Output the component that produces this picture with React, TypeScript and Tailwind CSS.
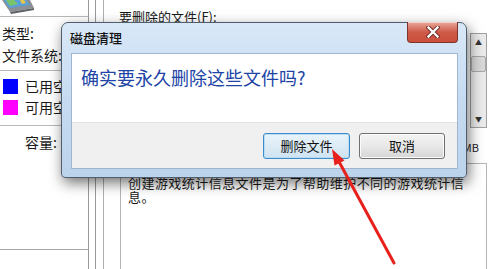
import React from "react";

const font = "font-['Noto_Sans_CJK_SC',sans-serif]";

function DriveIcon() {
  return (
    <svg width="36" height="14" viewBox="0 0 36 14" className="block">
      <path d="M2 0 L30 0 L34 8 L10 12 Z" fill="#8c8f94" />
      <path d="M4 0 L26 0 L30 5 L9 8 Z" fill="#5aa0d8" />
      <path d="M6 0 L14 0 L18 4 L10 6 Z" fill="#7cc46a" />
      <path d="M10 12 L34 8 L34 10 L11 14 Z" fill="#5e6166" />
      <path d="M20 0 L24 0 L26 3 L22 4 Z" fill="#e6c64a" />
    </svg>
  );
}

function CloseX() {
  return (
    <svg width="14" height="12" viewBox="0 0 14 12">
      <path d="M2.5 1.5 L11.5 10.5 M11.5 1.5 L2.5 10.5" stroke="#6b2a22" strokeWidth="4.2" strokeLinecap="square" />
      <path d="M2.5 1.5 L11.5 10.5 M11.5 1.5 L2.5 10.5" stroke="#ffffff" strokeWidth="2.4" strokeLinecap="square" />
    </svg>
  );
}

export default function App() {
  return (
    <div className={`relative w-[499px] h-[269px] overflow-hidden bg-white text-[#1a1a1a] ${font}`}>
      {/* background window */}
      <div className="flex h-full">
        {/* left panel */}
        <div className="w-[88px] flex flex-col">
          <div className="h-[17px] border-b border-[#b8b8b8] overflow-hidden">
            <DriveIcon />
          </div>
          <div className="mt-[6px] flex flex-col gap-[2px] pl-[2px] text-[14px] leading-[20px]">
            <div className="h-[20px] whitespace-nowrap">类型:</div>
            <div className="h-[20px] whitespace-nowrap">文件系统:</div>
          </div>
          <div className="mt-[5px] border-b border-[#b8b8b8]" />
          <div className="mt-[5px] flex flex-col gap-[1px] text-[14px] leading-[20px]">
            <div className="h-[20px] flex items-center gap-[7px] pl-[3px] whitespace-nowrap">
              <div className="w-[15px] h-[15px] bg-[#0000ff] shrink-0" />
              <span>已用空间:</span>
            </div>
            <div className="h-[20px] flex items-center gap-[7px] pl-[3px] whitespace-nowrap">
              <div className="w-[15px] h-[15px] bg-[#ff00ff] shrink-0" />
              <span>可用空间:</span>
            </div>
          </div>
          <div className="mt-[8px] border-b border-[#b8b8b8]" />
          <div className="mt-[6px] h-[20px] pl-[25px] text-[14px] leading-[20px] whitespace-nowrap">容量:</div>
          <div className="mt-[97px] border-b border-[#a8a8a8]" />
        </div>
        {/* vertical separators */}
        <div className="w-[7px] border-l border-[#9a9a9a]" />
        <div className="w-[8px] border-l border-[#9a9a9a]" />
        <div className="w-[17px] border-l border-[#b0b0b0]" />
        {/* right panel */}
        <div className="flex-1 flex flex-col pr-[12px]">
          <div className="mt-[10px] h-[13px] text-[13px] leading-[13px] whitespace-nowrap -ml-[1px]">要删除的文件(F):</div>
          <div className="mt-[10px] h-[95px] flex justify-end">
            <div className="w-[17px] h-full border border-[#a0a0a0] bg-[#eaeaea] flex flex-col items-center">
              <div className="h-[16px] flex items-center justify-center text-[7px] text-[#333]">▲</div>
              <div className="mt-[6px] w-[15px] h-[16px] bg-[#d8d8d8] border border-[#a8a8a8] rounded-[2px]" />
              <div className="flex-1" />
              <div className="h-[16px] flex items-center justify-center text-[7px] text-[#333]">▼</div>
            </div>
          </div>
          <div className="mt-[13px] h-[12px] text-right pr-[8px] text-[11px] leading-[12px]">MB</div>
          <div className="mt-[10px] flex-1 border-t border-l border-r border-[#b4b4b4] px-[7px] pt-[12px] text-[13px] leading-[14px] tracking-[0.45px]">
            <div className="whitespace-nowrap">创建游戏统计信息文件是为了帮助维护不同的游戏统计信</div>
            <div className="whitespace-nowrap">息。</div>
          </div>
        </div>
      </div>

      {/* dialog */}
      <div className="absolute left-[61px] top-[22px] w-[406px] h-[156px] border border-[#4f5d6c] rounded-t-[7px] rounded-b-[4px] bg-gradient-to-b from-[#d9e8f8] via-[#c6dbf1] to-[#bcd3ec] pl-[9px] pr-[8px] flex flex-col shadow-[2px_5px_14px_rgba(0,0,0,0.55)]">
        <div className="h-[30px] flex justify-between items-start">
          <div className="mt-[7px] -ml-[1px] text-[13px] leading-[16px] font-medium text-[#111] whitespace-nowrap">磁盘清理</div>
          <div className="-mt-[1px] w-[51px] h-[21px] rounded-b-[4px] border border-t-0 border-[#7c3429] bg-gradient-to-b from-[#e9a89c] via-[#cf5a48] to-[#c9503c] flex items-center justify-center shadow-[inset_0_1px_0_rgba(255,255,255,0.5)]">
            <CloseX />
          </div>
        </div>
        <div className="h-[116px] flex flex-col bg-white border border-[#9fb6d1]">
          <div className="h-[68px] pl-[9px] pt-[11px] text-[18px] leading-[24px] text-[#2043a6] whitespace-nowrap">
            确实要永久删除这些文件吗?
          </div>
          <div className="flex-1 bg-[#f0f0f0] border-t border-[#e2e2e2] flex justify-end items-start gap-[9px] pr-[12px] pt-[10px]">
            <div className="w-[87px] h-[26px] rounded-[3px] border border-[#3c8ccb] bg-gradient-to-b from-[#eaf4fb] to-[#cfe3f1] shadow-[inset_0_0_0_1px_#b9ddf4] flex items-center justify-center text-[13px] text-[#111]">
              删除文件
            </div>
            <div className="w-[86px] h-[26px] rounded-[3px] border border-[#707070] bg-gradient-to-b from-[#f4f4f4] via-[#e8e8e8] to-[#d6d6d6] shadow-[inset_0_0_0_1px_#fbfbfb] flex items-center justify-center text-[13px] text-[#111]">
              取消
            </div>
          </div>
        </div>
      </div>

      {/* red arrow */}
      <svg className="absolute left-0 top-0 pointer-events-none" width="499" height="269" viewBox="0 0 499 269">
        <line x1="394" y1="263" x2="337" y2="158" stroke="#e8201c" strokeWidth="3" strokeLinecap="round" />
        <polygon points="332,149 344.5,160.5 334.5,165.5" fill="#e8201c" />
      </svg>
    </div>
  );
}
